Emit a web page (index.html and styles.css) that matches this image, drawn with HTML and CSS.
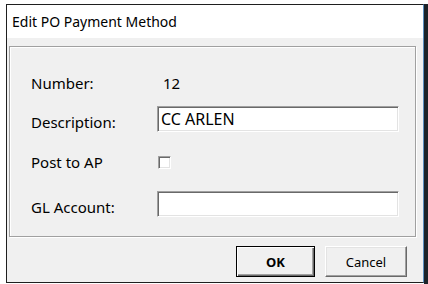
FILE: index.html
```html
<!DOCTYPE html>
<html lang="en">
<head>
    <meta charset="UTF-8">
    <title>Edit PO Payment Method</title>
    <link rel="stylesheet" href="styles.css">
</head>
<body>
    <div class="desk">
        <div class="window">
            <div class="titlebar">Edit PO Payment Method</div>
            <div class="client">
                <div class="groupbox">
                    <div class="row row-number">
                        <span class="label">Number:</span>
                        <span class="value">12</span>
                    </div>
                    <div class="row row-input">
                        <span class="label">Description:</span>
                        <div class="textbox">CC ARLEN</div>
                    </div>
                    <div class="row row-check">
                        <span class="label">Post to AP</span>
                        <div class="checkbox"></div>
                    </div>
                    <div class="row row-input">
                        <span class="label">GL Account:</span>
                        <div class="textbox"></div>
                    </div>
                </div>
                <div class="buttons">
                    <button class="btn btn-default">OK</button>
                    <button class="btn">Cancel</button>
                </div>
            </div>
        </div>
        <div class="backdrop"></div>
    </div>
</body>
</html>
```

FILE: styles.css
```css
html, body {
    margin: 0;
    padding: 0;
    background: #ffffff;
}
body {
    width: 428px;
    height: 284px;
    overflow: hidden;
    font-family: "Noto Sans", "Open Sans", sans-serif;
}
.desk {
    display: flex;
    padding: 4px 0 0 6px;
}
.window {
    width: 416px;
    height: 277px;
    border: 1px solid #1f1f1f;
    border-right-color: #5b8fc0;
    display: flex;
    flex-direction: column;
    background: #f0f0f0;
}
.backdrop {
    flex: 1;
    height: 280px;
    background: #1c2329;
}
.titlebar {
    height: 33px;
    background: #ffffff;
    padding-left: 5px;
    font-size: 14px;
    line-height: 33px;
    color: #000;
}
.client {
    padding: 8px 0 0 2px;
}
.groupbox {
    width: 405px;
    height: 189px;
    border: 1px solid #a0a0a0;
    box-shadow: inset 1px 1px 0 #ffffff, 1px 1px 0 #ffffff;
    box-sizing: content-box;
    padding: 0;
}
.row {
    display: flex;
    align-items: center;
    padding-left: 21px;
}
.label {
    width: 126px;
    font-size: 15px;
    color: #000;
}
.value {
    font-size: 15px;
    padding-left: 6px;
}
.row-number {
    margin-top: 25px;
    height: 22px;
}
.row-input {
    height: 28px;
}
.row-input .label {
    padding-top: 6px;
}
.row-number + .row-input {
    margin-top: 11px;
}
.row-check {
    margin-top: 22px;
    height: 14px;
}
.row-check + .row-input {
    margin-top: 21px;
}
.textbox {
    width: 237px;
    height: 24px;
    background: #ffffff;
    border: 1px solid;
    border-color: #a0a0a0 #ffffff #ffffff #a0a0a0;
    box-shadow: inset 1px 1px 0 #696969, inset -1px -1px 0 #e3e3e3;
    padding-left: 3px;
    font-size: 16px;
    line-height: 24px;
    color: #000;
    box-sizing: content-box;
}
.checkbox {
    width: 11px;
    height: 11px;
    margin-left: 1px;
    background: #ffffff;
    border: 1px solid;
    border-color: #a0a0a0 #ffffff #ffffff #a0a0a0;
    box-shadow: inset 1px 1px 0 #696969, inset -1px -1px 0 #e3e3e3;
}
.buttons {
    display: flex;
    justify-content: flex-end;
    gap: 10px;
    padding: 9px 16px 0 0;
}
.btn {
    height: 31px;
    width: 79px;
    background: #f0f0f0;
    border: 1px solid;
    border-color: #ffffff #696969 #696969 #ffffff;
    box-shadow: inset -1px -1px 0 #a0a0a0, inset 1px 1px 0 #e3e3e3;
    font-family: "Noto Sans", "Open Sans", sans-serif;
    font-size: 13px;
    color: #000;
    padding: 0;
}
.btn + .btn {
    width: 82px;
}
.btn-default {
    border: 1px solid #000000;
    box-shadow: inset 1px 1px 0 #ffffff, inset -1px -1px 0 #696969, inset -2px -2px 0 #a0a0a0;
    font-weight: bold;
}
```
